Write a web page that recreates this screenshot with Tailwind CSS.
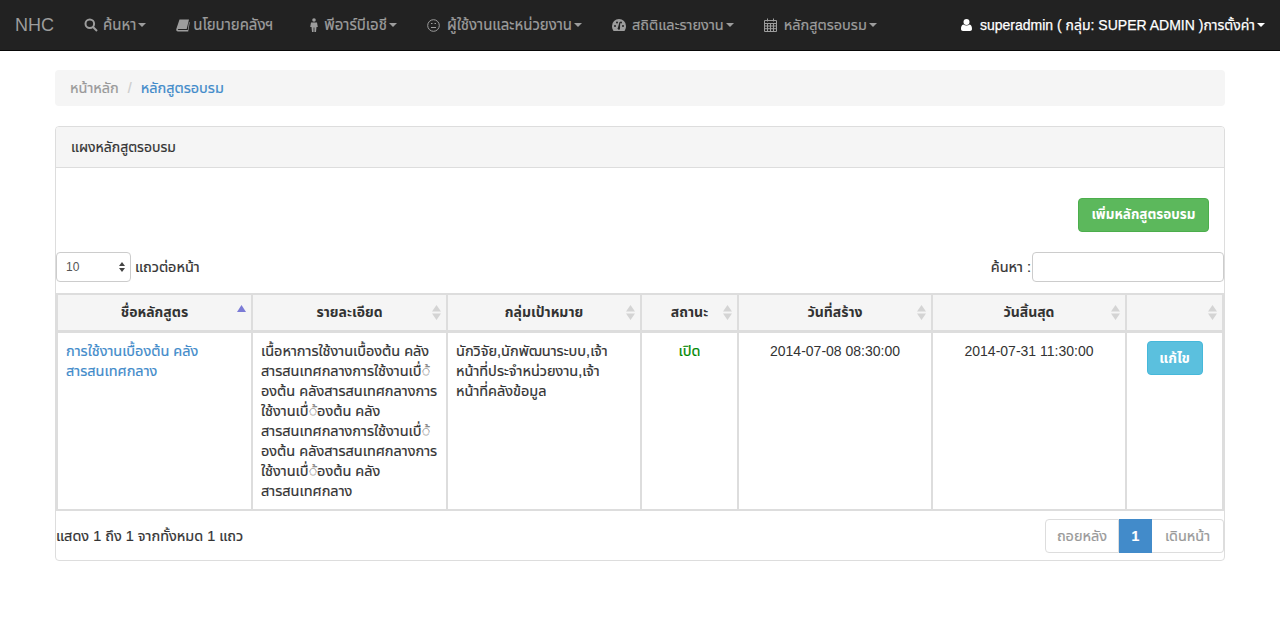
<!DOCTYPE html>
<html lang="th">

<head>
  <meta charset="UTF-8" />
  <title>หลักสูตรอบรม</title>
  <script src="https://cdn.jsdelivr.net/npm/@tailwindcss/browser@4"></script>
</head>

<body class="bg-white text-[14.500px] leading-[20px] text-[#333] font-['Liberation_Sans','Noto_Sans_Thai','Noto_Sans',sans-serif]">

  <!-- Navbar -->
  <nav class="h-[51px] bg-[#222] border-b border-[#080808] flex items-center pl-[15px] pr-[15px] text-[#9d9d9d] whitespace-nowrap [-webkit-text-stroke:0.2px]">
    <a class="text-[18px] mr-[30px] [-webkit-text-stroke:0px]">NHC</a>
    <div class="flex items-center gap-[30px] flex-1">
      <a class="flex items-center text-[15px]">
        <svg class="w-[14px] h-[14px] mr-[5px]" viewBox="0 0 14 14" fill="none" stroke="currentColor" stroke-width="2"><circle cx="5.800" cy="5.800" r="4.300"/><path d="M9 9l4 4"/></svg>ค้นหา<span class="ml-[2px] border-x-[4px] border-x-transparent border-t-[4px] border-t-current"></span>
      </a>
      <a class="flex items-center mr-[6px] text-[15px]">
        <svg class="w-[14px] h-[14px] mr-[3px]" viewBox="0 0 14 14" fill="currentColor"><path d="M3.500 1.500h9.500l-2.300 9.500H2.500c-.8 0-1 .9-.3 1h9.600l1.200-8 .7.5-1.500 9H2c-1.500 0-2-1.200-1.700-2.500z"/></svg>นโยบายคลังฯ
      </a>
      <a class="flex items-center text-[15px]">
        <svg class="w-[10px] h-[14px] mr-[5px]" viewBox="0 0 10 14" fill="currentColor"><circle cx="5" cy="2" r="1.800"/><path d="M2 4.500h6l.8 4.500H7.500l-.5 5H5.400V9.500h-.8V14H3L2.500 9H1.200z"/></svg>พีอาร์บีเอชี<span class="ml-[2px] border-x-[4px] border-x-transparent border-t-[4px] border-t-current"></span>
      </a>
      <a class="flex items-center text-[15px]">
        <svg class="w-[13px] h-[13px] mr-[7px]" viewBox="0 0 13 13" fill="none" stroke="currentColor"><circle cx="6.500" cy="6.500" r="5.800"/><path d="M4 8.500h5M4 4.500h1.500M7.500 4.500H9"/></svg>ผู้ใช้งานและหน่วยงาน<span class="ml-[2px] border-x-[4px] border-x-transparent border-t-[4px] border-t-current"></span>
      </a>
      <a class="flex items-center">
        <svg class="w-[14px] h-[12px] mr-[6px]" viewBox="0 0 14 12" fill="currentColor"><path d="M7 0a7 7 0 0 0-7 7c0 2 .6 3.500 1.500 5h11c.9-1.500 1.500-3 1.500-5a7 7 0 0 0-7-7z"/><g fill="#222"><circle cx="3" cy="7" r="1"/><circle cx="5" cy="3.500" r="1"/><circle cx="9" cy="3.500" r="1"/><circle cx="11" cy="7" r="1"/><path d="M6 8.500l1.500-5.500.7.200L8 9.500a1.200 1.200 0 1 1-2-1z"/></g></svg>สถิติและรายงาน<span class="ml-[2px] border-x-[4px] border-x-transparent border-t-[4px] border-t-current"></span>
      </a>
      <a class="flex items-center">
        <svg class="w-[13px] h-[14px] mr-[7px]" viewBox="0 0 13 14" fill="none" stroke="currentColor"><path d="M.5 2.500h12v11H.5zM.5 5.500h12M.5 8h12M.5 10.700h12M3.500 5.500v8M6.500 5.500v8M9.500 5.500v8M3.500 .5v3M9.500 .5v3"/></svg>หลักสูตรอบรม<span class="ml-[2px] border-x-[4px] border-x-transparent border-t-[4px] border-t-current"></span>
      </a>
    </div>
    <a class="flex items-center text-white text-[14px] [-webkit-text-stroke:0.25px]">
      <svg class="w-[11px] h-[12px] mr-[8px]" viewBox="0 0 11 12" fill="currentColor"><circle cx="5.500" cy="3" r="3"/><path d="M2.300 5.500c1.800 1.300 4.600 1.300 6.400 0 1.500.3 2.300 2 2.300 4.500 0 1.200-.8 2-2 2H2c-1.200 0-2-.8-2-2 0-2.500.8-4.200 2.300-4.500z"/></svg>superadmin ( กลุ่ม: SUPER ADMIN )การตั้งค่า<span class="ml-[2px] border-x-[4px] border-x-transparent border-t-[4px] border-t-current"></span>
    </a>
  </nav>

  <main class="w-[1170px] mx-auto pt-[19px]">

    <!-- Breadcrumb -->
    <div class="h-[36px] bg-[#f5f5f5] rounded-[4px] flex items-center px-[15px] [-webkit-text-stroke:0.2px]">
      <a class="text-[#999]">หน้าหลัก</a>
      <span class="text-[#ccc] px-[9px] text-[14px]">/</span>
      <a class="text-[#428bca]">หลักสูตรอบรม</a>
    </div>

    <!-- Panel -->
    <section class="mt-[20px] h-[435px] border border-[#ddd] rounded-[4px]">
      <div class="h-[41px] bg-[#f5f5f5] border-b border-[#ddd] rounded-t-[3px] flex items-center px-[15px] text-[14px] [-webkit-text-stroke:0.2px]">แผงหลักสูตรอบรม</div>

      <div class="flex justify-end pt-[30px] pr-[15px]">
        <a class="h-[34px] w-[131px] justify-center flex items-center bg-[#5cb85c] border border-[#4cae4c] rounded-[4px] text-white font-bold text-[13.500px]">เพิ่มหลักสูตรอบรม</a>
      </div>

      <div class="flex justify-between items-center mt-[20px] [-webkit-text-stroke:0.2px]">
        <div class="flex items-center">
          <div class="relative w-[75px] h-[30px] border border-[#ccc] rounded-[4px] flex items-center pl-[9px] text-[12px] text-[#555] [-webkit-text-stroke:0px]">
            10
            <svg class="absolute right-[5px] top-[9px] w-[6px] h-[10px]" viewBox="0 0 6 10" fill="#444"><path d="M3 0l3 4H0zM3 10L0 6h6z"/></svg>
          </div>
          <span class="ml-[4px]">แถวต่อหน้า</span>
        </div>
        <div class="flex items-center">
          <span class="mr-[1px]">ค้นหา :</span>
          <div class="w-[192px] h-[30px] border border-[#ccc] rounded-[4px]"></div>
        </div>
      </div>

      <table class="mt-[11px] w-[1168px] table-fixed border-collapse border-2 border-[#ddd]">
        <colgroup>
          <col class="w-[195px]" /><col class="w-[195px]" /><col class="w-[194px]" /><col class="w-[97px]" /><col class="w-[194px]" /><col class="w-[194px]" /><col class="w-[97px]" />
        </colgroup>
        <thead class="bg-[#f5f5f5] text-[14px]">
          <tr class="h-[37px]">
            <th class="relative border-2 border-[#ddd] border-b-[3px] font-bold">ชื่อหลักสูตร
              <svg class="absolute right-[5px] top-[10px] w-[9px] h-[7px]" viewBox="0 0 9 7" fill="#7b7bd6"><path d="M4.500 0L9 7H0z"/></svg>
            </th>
            <th class="relative border-2 border-[#ddd] border-b-[3px] font-bold">รายละเอียด
              <svg class="absolute right-[5px] top-[10px] w-[9px] h-[15px]" viewBox="0 0 9 15" fill="#d4d4d4"><path d="M4.500 0L9 6.500H0zM4.500 15L0 8.500h9z"/></svg>
            </th>
            <th class="relative border-2 border-[#ddd] border-b-[3px] font-bold">กลุ่มเป้าหมาย
              <svg class="absolute right-[5px] top-[10px] w-[9px] h-[15px]" viewBox="0 0 9 15" fill="#d4d4d4"><path d="M4.500 0L9 6.500H0zM4.500 15L0 8.500h9z"/></svg>
            </th>
            <th class="relative border-2 border-[#ddd] border-b-[3px] font-bold">สถานะ
              <svg class="absolute right-[5px] top-[10px] w-[9px] h-[15px]" viewBox="0 0 9 15" fill="#d4d4d4"><path d="M4.500 0L9 6.500H0zM4.500 15L0 8.500h9z"/></svg>
            </th>
            <th class="relative border-2 border-[#ddd] border-b-[3px] font-bold">วันที่สร้าง
              <svg class="absolute right-[5px] top-[10px] w-[9px] h-[15px]" viewBox="0 0 9 15" fill="#d4d4d4"><path d="M4.500 0L9 6.500H0zM4.500 15L0 8.500h9z"/></svg>
            </th>
            <th class="relative border-2 border-[#ddd] border-b-[3px] font-bold">วันสิ้นสุด
              <svg class="absolute right-[5px] top-[10px] w-[9px] h-[15px]" viewBox="0 0 9 15" fill="#d4d4d4"><path d="M4.500 0L9 6.500H0zM4.500 15L0 8.500h9z"/></svg>
            </th>
            <th class="relative border-2 border-[#ddd] border-b-[3px]">
              <svg class="absolute right-[5px] top-[10px] w-[9px] h-[15px]" viewBox="0 0 9 15" fill="#d4d4d4"><path d="M4.500 0L9 6.500H0zM4.500 15L0 8.500h9z"/></svg>
            </th>
          </tr>
        </thead>
        <tbody class="[-webkit-text-stroke:0.2px]">
          <tr class="align-top">
            <td class="border-2 border-[#ddd] p-[8px] text-[#428bca]">การใช้งานเบื้องต้น คลัง<br />สารสนเทศกลาง</td>
            <td class="border-2 border-[#ddd] p-[8px] whitespace-nowrap">เนื้อหาการใช้งานเบื้องต้น คลัง<br />สารสนเทศกลางการใช้งานเบื่<span class="text-[#888]">◌้</span><br />องต้น คลังสารสนเทศกลางการ<br />ใช้งานเบื่<span class="text-[#888]">◌้</span>องต้น คลัง<br />สารสนเทศกลางการใช้งานเบื่<span class="text-[#888]">◌้</span><br />องต้น คลังสารสนเทศกลางการ<br />ใช้งานเบื่<span class="text-[#888]">◌้</span>องต้น คลัง<br />สารสนเทศกลาง</td>
            <td class="border-2 border-[#ddd] p-[8px] whitespace-nowrap">นักวิจัย,นักพัฒนาระบบ,เจ้า<br />หน้าที่ประจำหน่วยงาน,เจ้า<br />หน้าที่คลังข้อมูล</td>
            <td class="border-2 border-[#ddd] p-[8px] text-center text-[#080]">เปิด</td>
            <td class="border-2 border-[#ddd] p-[8px] text-center text-[14px] [-webkit-text-stroke:0px]">2014-07-08 08:30:00</td>
            <td class="border-2 border-[#ddd] p-[8px] text-center text-[14px] [-webkit-text-stroke:0px]">2014-07-31 11:30:00</td>
            <td class="border-2 border-[#ddd] p-[8px] text-center [-webkit-text-stroke:0px]">
              <a class="inline-flex items-center justify-center h-[34px] w-[56px] bg-[#5bc0de] border border-[#46b8da] rounded-[4px] text-white font-bold text-[14px]">แก้ไข</a>
            </td>
          </tr>
        </tbody>
      </table>

      <div class="flex justify-between items-center mt-[8px] [-webkit-text-stroke:0.2px]">
        <span>แสดง 1 ถึง 1 จากทั้งหมด 1 แถว</span>
        <div class="flex h-[34px]">
          <a class="w-[74px] justify-center flex items-center border border-[#ddd] rounded-l-[4px] text-[#999]">ถอยหลัง</a>
          <a class="w-[33px] justify-center flex items-center bg-[#428bca] text-white font-bold text-[14px]">1</a>
          <a class="w-[72px] justify-center flex items-center border border-[#ddd] border-l-0 rounded-r-[4px] text-[#999]">เดินหน้า</a>
        </div>
      </div>
    </section>
  </main>
</body>

</html>
